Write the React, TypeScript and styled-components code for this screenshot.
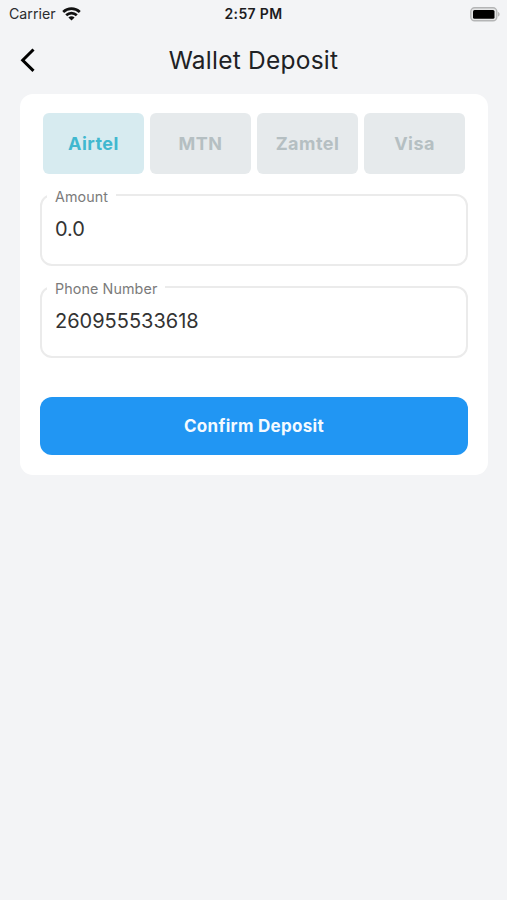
import React from "react";
import styled, { createGlobalStyle } from "styled-components";

const GlobalStyle = createGlobalStyle`
  * { box-sizing: border-box; }
  body {
    margin: 0;
    background: #f3f4f6;
    font-family: Inter, "Liberation Sans", sans-serif;
    color: #202124;
  }
  button, input { font-family: inherit; }
`;

const Screen = styled.div`
  min-height: 900px;
  display: flex;
  flex-direction: column;
`;

const StatusBar = styled.div`
  height: 27px;
  padding: 0 7px 0 9px;
  display: grid;
  grid-template-columns: 1fr auto 1fr;
  align-items: center;
`;

const Carrier = styled.div`
  display: flex;
  align-items: center;
  gap: 6px;
  font-size: 14.2px;
  line-height: 28px;
  color: #2b2c2e;
`;

const Clock = styled.div`
  font-size: 14px;
  font-weight: 600;
  line-height: 28px;
  letter-spacing: 0.35px;
  margin-left: -2px;
  color: #1c1c1e;
`;

const BatterySlot = styled.div`
  display: flex;
  justify-content: flex-end;
`;

const Header = styled.header`
  height: 67px;
  padding: 0 20px 2px;
  display: grid;
  grid-template-columns: 40px 1fr 40px;
  align-items: center;
`;

const BackButton = styled.button`
  display: flex;
  border: 0;
  padding: 0;
  background: none;
`;

const Title = styled.h1`
  margin: 0;
  text-align: center;
  font-size: 24.5px;
  font-weight: 400;
  line-height: 32px;
  letter-spacing: 0.24px;
`;

const Card = styled.main`
  margin: 0 19px 0 20px;
  height: 381px;
  padding: 19px 20px 20px;
  border-radius: 13px;
  background: #fff;
  display: flex;
  flex-direction: column;
`;

const Providers = styled.div`
  display: grid;
  grid-template-columns: repeat(4, 1fr);
  gap: 6px;
  margin: 0 3px;
`;

const Provider = styled.button<{ $active?: boolean }>`
  height: 61px;
  padding: 0;
  border: 0;
  border-radius: 6px;
  font-size: 18px;
  font-weight: 700;
  letter-spacing: 0.45px;
  background: ${(p) => (p.$active ? "#d7ebf0" : "#e6eaec")};
  color: ${(p) => (p.$active ? "#41b8cf" : "#b5bfc2")};
`;

const Field = styled.fieldset<{ $gap: number }>`
  min-width: 0;
  height: 82px;
  margin: ${(p) => p.$gap}px 0 0;
  padding: 0 13px;
  border: 2px solid #ebebeb;
  border-radius: 12px;
`;

const Label = styled.legend`
  margin-left: -8px;
  padding: 4px 8px 0;
  font-size: 14.3px;
  line-height: 18px;
  letter-spacing: 0.1px;
  color: #7b7b7b;
`;

const Input = styled.input`
  display: block;
  width: 100%;
  height: 30px;
  margin-top: 8px;
  padding: 0;
  border: 0;
  outline: 0;
  background: none;
  font-size: 20px;
  letter-spacing: 0;
  color: #333;
`;

const Submit = styled.button`
  height: 58px;
  margin-top: auto;
  border: 0;
  border-radius: 12px;
  background: #2196f3;
  color: #f4faff;
  font-size: 17px;
  font-weight: 700;
  letter-spacing: 0.3px;
`;

const WifiIcon = () => (
  <svg width="19" height="14" viewBox="0 0 19 14" fill="none" stroke="#111" strokeWidth="2.700">
    <path d="M1.200 5C5.900.6 13.100.6 17.800 5" />
    <path d="M4.200 8.300c3-2.900 7.600-2.900 10.600 0" />
    <path d="M9.500 13.400 6.400 10.600c1.700-1.700 4.500-1.700 6.200 0Z" fill="#111" stroke="none" />
  </svg>
);

const BatteryIcon = () => (
  <svg width="30" height="15" viewBox="0 0 30 15">
    <rect x=".8" y=".8" width="26" height="13" rx="3.800" fill="#e4e5e6" stroke="#b4b5b6" strokeWidth="1.400" />
    <rect x="3" y="3" width="21.500" height="8.800" rx="1.500" fill="#000" />
    <path d="M28.200 5v4.600c1.800-.7 1.800-3.900 0-4.600Z" fill="#aaa" />
  </svg>
);

const BackIcon = () => (
  <svg width="16" height="26" viewBox="0 0 16 26" fill="none" stroke="#000" strokeWidth="3">
    <path d="M13.500 2.500 2.700 13.200 13.500 23.900" />
  </svg>
);

const providers = ["Airtel", "MTN", "Zamtel", "Visa"];

export default function App() {
  return (
    <Screen>
      <GlobalStyle />
      <StatusBar>
        <Carrier>
          Carrier
          <WifiIcon />
        </Carrier>
        <Clock>2:57 PM</Clock>
        <BatterySlot>
          <BatteryIcon />
        </BatterySlot>
      </StatusBar>
      <Header>
        <BackButton aria-label="Back">
          <BackIcon />
        </BackButton>
        <Title>Wallet Deposit</Title>
      </Header>
      <Card>
        <Providers>
          {providers.map((name, i) => (
            <Provider key={name} $active={i === 0}>
              {name}
            </Provider>
          ))}
        </Providers>
        <Field $gap={10}>
          <Label>Amount</Label>
          <Input defaultValue="0.0" aria-label="Amount" />
        </Field>
        <Field $gap={9.5}>
          <Label>Phone Number</Label>
          <Input defaultValue="260955533618" aria-label="Phone Number" />
        </Field>
        <Submit>Confirm Deposit</Submit>
      </Card>
    </Screen>
  );
}
